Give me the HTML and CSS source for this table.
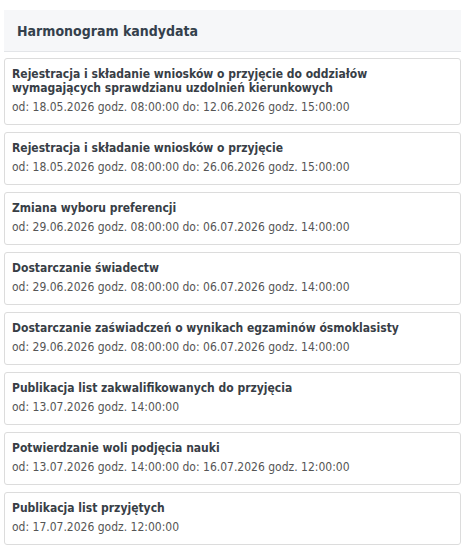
FILE: index.html
```html
<!DOCTYPE html>
<html lang="pl">
<head>
<meta charset="utf-8">
<title>Harmonogram kandydata</title>
<link rel="stylesheet" href="styles.css">
</head>
<body>
<div class="panel">
  <div class="panel-header">Harmonogram kandydata</div>
  <div class="list">
    <div class="item">
      <div class="item-title">Rejestracja i składanie wniosków o przyjęcie do oddziałów wymagających sprawdzianu uzdolnień kierunkowych</div>
      <div class="item-date">od: 18.05.2026 godz. 08:00:00 do: 12.06.2026 godz. 15:00:00</div>
    </div>
    <div class="item">
      <div class="item-title">Rejestracja i składanie wniosków o przyjęcie</div>
      <div class="item-date">od: 18.05.2026 godz. 08:00:00 do: 26.06.2026 godz. 15:00:00</div>
    </div>
    <div class="item">
      <div class="item-title">Zmiana wyboru preferencji</div>
      <div class="item-date">od: 29.06.2026 godz. 08:00:00 do: 06.07.2026 godz. 14:00:00</div>
    </div>
    <div class="item">
      <div class="item-title">Dostarczanie świadectw</div>
      <div class="item-date">od: 29.06.2026 godz. 08:00:00 do: 06.07.2026 godz. 14:00:00</div>
    </div>
    <div class="item">
      <div class="item-title">Dostarczanie zaświadczeń o wynikach egzaminów ósmoklasisty</div>
      <div class="item-date">od: 29.06.2026 godz. 08:00:00 do: 06.07.2026 godz. 14:00:00</div>
    </div>
    <div class="item">
      <div class="item-title">Publikacja list zakwalifikowanych do przyjęcia</div>
      <div class="item-date">od: 13.07.2026 godz. 14:00:00</div>
    </div>
    <div class="item">
      <div class="item-title">Potwierdzanie woli podjęcia nauki</div>
      <div class="item-date">od: 13.07.2026 godz. 14:00:00 do: 16.07.2026 godz. 12:00:00</div>
    </div>
    <div class="item">
      <div class="item-title">Publikacja list przyjętych</div>
      <div class="item-date">od: 17.07.2026 godz. 12:00:00</div>
    </div>
  </div>
</div>
</body>
</html>
```
FILE: styles.css
```css
html, body {
  margin: 0;
  padding: 0;
  background: #fff;
}
body {
  font-family: "DejaVu Sans Condensed", "DejaVu Sans", sans-serif;
  padding: 10px 12px 0 4px;
}
.panel {
  width: 457px;
}
.panel-header {
  background: #f6f7f9;
  border-bottom: 1px solid #e3e5e8;
  height: 42px;
  box-sizing: border-box;
  padding: 1px 13px 0;
  display: flex;
  align-items: center;
  font-size: 14px;
  font-weight: bold;
  color: #34404c;
}
.list {
  display: flex;
  flex-direction: column;
  gap: 7px;
  padding-top: 6px;
}
.item {
  border: 1px solid #dcdcdc;
  border-radius: 3px;
  padding: 8px 7px 10px 7px;
}
.item-title {
  font-size: 12px;
  font-weight: bold;
  line-height: 14px;
  color: #383e46;
}
.item-date {
  font-size: 12px;
  line-height: 14px;
  margin-top: 5px;
  color: #555;
}
```
